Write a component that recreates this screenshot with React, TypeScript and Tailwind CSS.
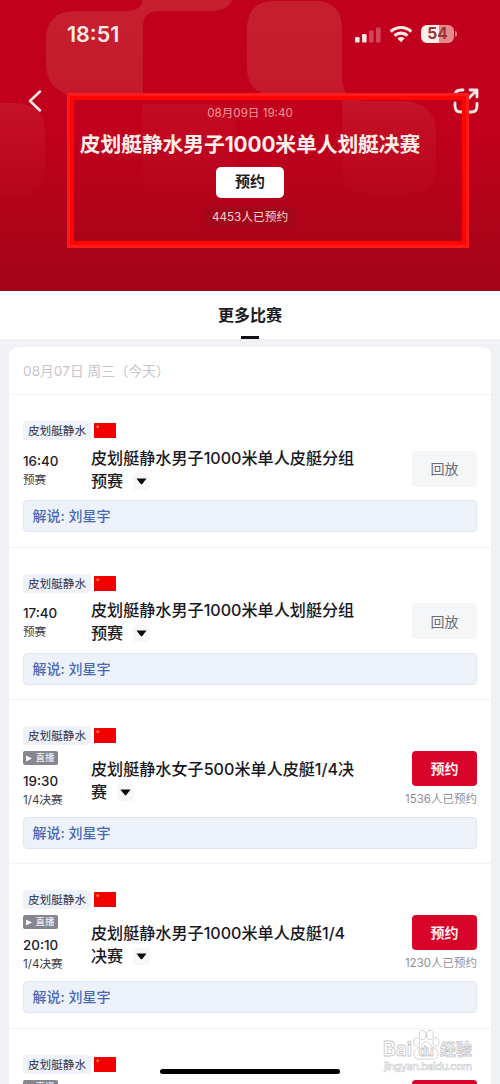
type Match = {
  time: string;
  stage: string;
  title: string[];
  booked?: string;
};

const matches: Match[] = [
  { time: "16:40", stage: "预赛", title: ["皮划艇静水男子1000米单人皮艇分组", "预赛"] },
  { time: "17:40", stage: "预赛", title: ["皮划艇静水男子1000米单人划艇分组", "预赛"] },
  { time: "19:30", stage: "1/4决赛", title: ["皮划艇静水女子500米单人皮艇1/4决", "赛"], booked: "1536" },
  { time: "20:10", stage: "1/4决赛", title: ["皮划艇静水男子1000米单人皮艇1/4", "决赛"], booked: "1230" },
];

function StatusBar() {
  return (
    <div className="flex h-[68px] items-center justify-between pl-[67px] pr-[43px] text-[#ffe9e6]">
      <span className="text-[21.500px] font-semibold">18:51</span>
      <div className="flex items-center">
        <svg width="26" height="17" viewBox="0 0 26 17" fill="currentColor">
          <rect x="0" y="11" width="4.600" height="5.500" rx="1" />
          <rect x="7" y="8" width="4.600" height="8.500" rx="1" />
          <rect x="14" y="4.500" width="4.600" height="12" rx="1" opacity=".3" />
          <rect x="21" y="1.500" width="4.600" height="15" rx="1" opacity=".3" />
        </svg>
        <svg className="ml-2" width="24" height="18" viewBox="0 0 24 18" fill="none" stroke="currentColor" strokeWidth="3.200">
          <path d="M1.700 6.600a15 15 0 0 1 20.600 0" />
          <path d="M5.500 10.700a9.500 9.500 0 0 1 13 0" />
          <path d="M12 17.200l-3.600-3.700a5.300 5.300 0 0 1 7.200 0z" fill="currentColor" stroke="none" />
        </svg>
        <div className="ml-2 flex h-[18px] w-[33px] items-center justify-center rounded-[6px] bg-linear-to-r from-[#fff0ed] from-55% to-[#e68a8d] to-55% text-[15.500px] font-bold text-[#9b3339]">
          54
        </div>
        <div className="ml-px h-[6px] w-[2px] rounded-r-full bg-[#e07078]" />
      </div>
    </div>
  );
}

function Header() {
  return (
    <div className="relative h-[290.500px] overflow-hidden bg-linear-to-b from-[#c1001d] from-45% to-[#a30518]">
      <svg className="absolute inset-0" width="500" height="290" viewBox="0 0 500 290">
        <defs>
          <linearGradient id="fade" x1="0" y1="0" x2="0" y2="210" gradientUnits="userSpaceOnUse">
            <stop offset="0" stopColor="#c8323a" stopOpacity=".62" />
            <stop offset=".4" stopColor="#c8323a" stopOpacity=".55" />
            <stop offset=".55" stopColor="#c8323a" stopOpacity=".3" />
            <stop offset="1" stopColor="#c8323a" stopOpacity="0" />
          </linearGradient>
        </defs>
        <g fill="url(#fade)">
          <path d="M142 0h90q-4 11-22 11h-50q-17 0-17 15v70H72q-26-6-26-34V40q0-29 30-29h50q16 0 16-11z" />
          <path d="M275 1h39q28 0 28 28v50q1 21 22 22h36q36 0 36 32v34q0 27-28 27h-38q-28 0-28-28V95h-67q-28 0-28-28V29q0-28 28-28z" />
          <path d="M0 103h15q30 0 30 30v34q0 28-30 30H0z" />
          <path d="M142 104h65q30 0 30 30v60h-65q-30 0-30-30z" opacity=".6" />
        </g>
      </svg>
      <div className="relative">
        <StatusBar />
        <div className="flex h-[35px] items-end justify-between pl-[27px] pr-[21px] text-[#ffe9e6]">
          <svg className="-mb-[10px]" width="16" height="24" viewBox="0 0 16 24" fill="none" stroke="currentColor" strokeWidth="2.500" strokeLinecap="round" strokeLinejoin="round">
            <path d="M13 2.500L3 12l10 9.500" />
          </svg>
          <svg className="-mb-[11px]" width="26" height="26" viewBox="0 0 26 26" fill="none" stroke="currentColor" strokeWidth="2.800" strokeLinecap="round" strokeLinejoin="round">
            <path d="M10 2H8Q2 2 2 8v2M2 15v3q0 6 6 6h2.500M15.500 24h3q5.500 0 5.500-6v-2.500M17 2h7v7M24 2l-8 8" />
          </svg>
        </div>
        <div className="flex flex-col items-center">
          <div className="h-5 text-[11.600px] leading-5 text-[#f49a98]">08月09日 19:40</div>
          <div className="mt-1.5 h-8 whitespace-nowrap text-[20.800px] font-bold leading-8 tracking-[-0.100px] text-[#ffefeb]">
            皮划艇静水男子1000米单人划艇决赛
          </div>
          <button className="mt-[6px] h-[31px] w-[68px] rounded-[5px] bg-white text-[15px] font-bold text-[#1c1c22]">
            预约
          </button>
          <div className="mt-[9px] h-5 rounded-sm bg-[#9d0a1b]/70 px-[7px] text-[11.700px] leading-5 text-[#ffd3cf]">
            4453人已预约
          </div>
        </div>
      </div>
      <div className="absolute left-[67px] top-[93px] h-[155px] w-[402px] border-[3px] border-[#fd1a19]">
        <div className="h-full w-full border-[4px] border-[#ff0502]" />
      </div>
    </div>
  );
}

function Flag() {
  return (
    <svg className="ml-[3px]" width="22" height="15" viewBox="0 0 22 15">
      <rect width="22" height="15" rx=".5" fill="#f20000" />
      <path d="M3.700 1.500l.5 1.500h1.500l-1.200.9.500 1.500-1.300-.9-1.300.9.500-1.500-1.200-.9h1.500z" fill="#ff9a18" />
    </svg>
  );
}

function RowTag() {
  return (
    <div className="flex h-[19px] items-center">
      <span className="h-[19px] w-[68px] rounded-[3px] bg-[#eff2f9] text-center text-[11.600px] leading-[20px] text-[#2e3148]">
        皮划艇静水
      </span>
      <Flag />
    </div>
  );
}

function LiveBadge() {
  return (
    <div className="mt-[6px] flex h-[14px] w-[35px] items-center justify-center gap-[3px] rounded-[2px] bg-[#85868e] text-[9.500px] font-medium leading-[14px] text-[#e9e9ed]">
      <svg width="6" height="7" viewBox="0 0 6 7" fill="#fff">
        <path d="M0 .5l6 3-6 3z" />
      </svg>
      直播
    </div>
  );
}

function MatchRow({ match }: { match: Match }) {
  const live = !!match.booked;
  return (
    <div className={`flex flex-col border-t border-[#f3f3f6] px-[14px] pt-[26px] ${live ? "h-[164.300px]" : "h-[152.500px]"}`}>
      <RowTag />
      <div className={`flex ${live ? "h-[72px]" : "h-[60px]"}`}>
        <div className="w-[68px] shrink-0">
          {live ? <LiveBadge /> : <div className="h-[9px]" />}
          <div className={`text-[13.400px] font-medium leading-5 text-[#202028] ${live ? "mt-[5.500px]" : "mt-[1.500px]"}`}>{match.time}</div>
          <div className="text-[11.600px] leading-[19px] text-[#3b3b45]">{match.stage}</div>
        </div>
        <div className={`flex-1 whitespace-nowrap text-[16.100px] font-medium leading-[23px] text-[#18181f] ${live ? "pt-[12.500px]" : "pt-[6.500px]"}`}>
          <div>{match.title[0]}</div>
          <div className="flex items-center">
            {match.title[1]}
            <span className="ml-[10px] flex h-[17px] w-[17px] items-center justify-center rounded-[3px] bg-[#f7f7f9]">
              <svg width="11" height="7" viewBox="0 0 11 7" fill="#08080c">
                <path d="M.5.500h10L6.300 5.900q-.8.800-1.600 0z" />
              </svg>
            </span>
          </div>
        </div>
        <div className={`flex w-[80px] shrink-0 flex-col items-end ${live ? "pt-[5.500px]" : "pt-[10.500px]"}`}>
          {live ? (
            <>
              <button className="h-[35px] w-[65px] rounded-[4px] bg-[#d90429] text-[14px] font-bold text-[#fff0f0]">预约</button>
              <div className="mt-[3px] whitespace-nowrap text-[11.500px] leading-5 text-[#8f8f98]">{match.booked}人已预约</div>
            </>
          ) : (
            <button className="h-[36px] w-[65px] rounded-[4px] bg-[#f5f6f8] text-[14px] text-[#6b6b74]">回放</button>
          )}
        </div>
      </div>
      <div className="h-8 shrink-0 rounded-[4px] border border-[#e0e5ef] bg-[#edf1fa] px-[8.500px] text-[14px] font-medium leading-[30px] text-[#4a69b5]">
        解说: 刘星宇
      </div>
    </div>
  );
}

// the last row only peeks in above the bottom edge
function PeekRow() {
  return (
    <div className="border-t border-[#f3f3f6] px-[14px] pt-[26px]">
      <RowTag />
      <div className="flex justify-between">
        <LiveBadge />
        <div className="mt-[6px] h-[35px] w-[65px] rounded-[4px] bg-[#d90429]" />
      </div>
    </div>
  );
}

function Watermark() {
  return (
    <svg className="absolute left-[380px] top-[1027px]" width="96" height="48" viewBox="0 0 96 48" fill="#fff" stroke="#c6c6ca" strokeWidth=".8">
      <text x="3" y="29" fontSize="20" fontWeight="700" fontFamily="Inter, sans-serif" textLength="29" lengthAdjust="spacingAndGlyphs">Bai</text>
      <path d="M34 26c1-5 6-5 8-9 2-3 6-3 8 0 2 4 7 4 8 9 1 6-5 7-9 6h-6c-4 1-10 0-9-6z" />
      <ellipse cx="36.500" cy="15" rx="3" ry="4.200" />
      <ellipse cx="42.500" cy="8" rx="3.300" ry="4.600" />
      <ellipse cx="50" cy="8" rx="3.300" ry="4.600" />
      <ellipse cx="56" cy="15" rx="3" ry="4.200" />
      <text x="38.500" y="29" fontSize="13" fontWeight="700" fontFamily="Inter, sans-serif" textLength="15">du</text>
      <text x="60" y="28" fontSize="16" fontWeight="700" fontFamily="Noto Sans CJK SC, sans-serif">经验</text>
      <text x="4" y="43" fontSize="11" fontWeight="500" fontFamily="Inter, sans-serif" textLength="88" strokeWidth=".5">jingyan.baidu.com</text>
    </svg>
  );
}

export default function App() {
  return (
    <div className="relative h-[1084px] w-[500px] overflow-hidden bg-[#f0f1f5] font-[Inter,'Noto_Sans_CJK_SC',sans-serif]">
      <Header />
      <div className="flex h-[48px] flex-col items-center bg-white pt-[12.500px]">
        <div className="text-[16px] font-bold leading-[24px] text-[#1b1b22]">更多比赛</div>
        <div className="mt-[8.500px] h-[3px] w-[18px] bg-[#111116]" />
      </div>
      <div className="mx-[9px] mt-[8px] rounded-t-[9px] bg-white">
        <div className="h-[47.500px] px-[14px] text-[13.700px] leading-[49px] text-[#c6c6ca]">08月07日 周三（今天）</div>
        {matches.map((m) => (
          <MatchRow key={m.time} match={m} />
        ))}
        <PeekRow />
      </div>
      <div className="absolute left-[160px] top-[1069px] h-[5px] w-[180px] rounded-full bg-black" />
      <Watermark />
    </div>
  );
}
